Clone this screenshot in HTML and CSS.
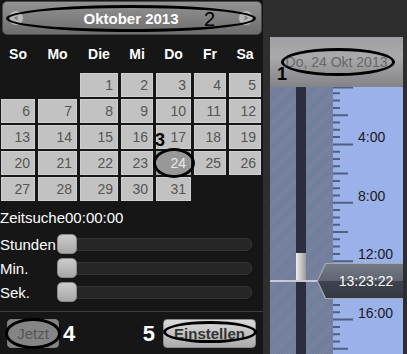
FILE: index.html
```html
<!DOCTYPE html>
<html lang="de">
<head>
    <meta charset="UTF-8">
    <meta name="viewport" content="width=device-width, initial-scale=1.0">
    <title>Kalender</title>
    <link rel="stylesheet" href="styles.css">
</head>
<body>
<div class="page">
    <!-- Datumsauswahl -->
    <div class="picker">
        <div class="month-bar">
            <span class="nav">
                <svg width="14" height="14" viewBox="0 0 14 14"><circle cx="7" cy="7" r="7" fill="#b9b9b9"/><path d="M4.5 7 L8.5 4.2 L8.5 9.8 Z" fill="#858585"/></svg>
            </span>
            <span class="month-title">Oktober 2013</span>
            <span class="nav">
                <svg width="14" height="14" viewBox="0 0 14 14"><circle cx="7" cy="7" r="7" fill="#b9b9b9"/><path d="M9.5 7 L5.5 4.2 L5.5 9.8 Z" fill="#858585"/></svg>
            </span>
            <span class="ring ring-month"></span>
            <span class="mark mark-2">2</span>
        </div>

        <div class="weekdays">
            <span>So</span><span>Mo</span><span>Die</span><span>Mi</span><span>Do</span><span>Fr</span><span>Sa</span>
        </div>

        <div class="days">
            <span class="day empty"></span><span class="day empty"></span>
            <span class="day">1</span><span class="day">2</span><span class="day">3</span><span class="day">4</span><span class="day">5</span>
            <span class="day">6</span><span class="day">7</span><span class="day">8</span><span class="day">9</span><span class="day">10</span><span class="day">11</span><span class="day">12</span>
            <span class="day">13</span><span class="day">14</span><span class="day">15</span><span class="day">16</span><span class="day">17</span><span class="day">18</span><span class="day">19</span>
            <span class="day">20</span><span class="day">21</span><span class="day">22</span><span class="day">23</span>
            <span class="day selected">24<span class="ring ring-day"></span><span class="mark mark-3">3</span></span>
            <span class="day">25</span><span class="day">26</span>
            <span class="day">27</span><span class="day">28</span><span class="day">29</span><span class="day">30</span><span class="day">31</span>
            <span class="day empty"></span><span class="day empty"></span>
        </div>

        <div class="time-search">Zeitsuche00:00:00</div>

        <div class="sliders">
            <div class="slider-row"><span class="slider-label">Stunden</span><div class="track"><span class="handle"></span></div></div>
            <div class="slider-row"><span class="slider-label">Min.</span><div class="track"><span class="handle"></span></div></div>
            <div class="slider-row"><span class="slider-label">Sek.</span><div class="track"><span class="handle"></span></div></div>
        </div>

        <div class="footer">
            <button class="btn btn-now">Jetzt<span class="ring ring-now"></span></button>
            <span class="mark-white mark-4">4</span>
            <span class="mark-white mark-5">5</span>
            <button class="btn btn-set">Einstellen<span class="ring ring-set"></span></button>
        </div>
    </div>

    <!-- Zeitleiste -->
    <div class="timeline">
        <div class="tl-head">
            Do, 24 Okt 2013
            <span class="ring ring-date"></span>
            <span class="mark mark-1">1</span>
        </div>
        <div class="tl-body">
            <div class="lane">
                <div class="strip"><span class="rec"></span></div>
            </div>
            <div class="ruler">
                <svg width="70" height="267" viewBox="0 0 70 267">
                    <path class="ticks" d="M0 0.5h20 M0 57.4h20 M0 115.8h20 M0 174.2h20 M0 232.6h20
                        M0 28.2h15 M0 86.6h15 M0 145h15 M0 203.4h15 M0 261.8h15
                        M0 6.3h7 M0 13.6h7 M0 20.9h7 M0 35.5h7 M0 42.8h7 M0 50.1h7
                        M0 64.7h7 M0 72h7 M0 79.3h7 M0 93.9h7 M0 101.2h7 M0 108.5h7
                        M0 123.1h7 M0 130.4h7 M0 137.7h7 M0 152.3h7 M0 159.6h7 M0 166.9h7
                        M0 181.5h7 M0 188.8h7 M0 196.1h7 M0 210.7h7 M0 218h7 M0 225.3h7
                        M0 239.9h7 M0 247.2h7 M0 254.5h7"/>
                    <text x="25" y="55.4">4:00</text>
                    <text x="25" y="113.8">8:00</text>
                    <text x="25" y="172.2">12:00</text>
                    <text x="25" y="230.6">16:00</text>
                </svg>
            </div>
            <span class="now-line"></span>
            <div class="now-tag"><span>13:23:22</span></div>
        </div>
    </div>
</div>
</body>
</html>
```

FILE: styles.css
```css
body {
    margin: 0;
    background: #2e2e2e;
    font-family: "Liberation Sans", Arial, sans-serif;
}
.page {
    display: flex;
    width: 407px;
    height: 354px;
    overflow: hidden;
}

/* Datumsauswahl */
.picker {
    flex: none;
    width: 263px;
    background: #161616;
}
.month-bar {
    position: relative;
    display: flex;
    align-items: center;
    justify-content: space-between;
    height: 34px;
    margin: 1px 1px 0 2px;
    padding: 0 8px 0 6px;
    box-sizing: border-box;
    border: 1px solid #4a4a4a;
    border-radius: 5px;
    background: linear-gradient(#939393, #6d6d6d);
}
.nav {
    display: flex;
}
.month-title {
    color: #fff;
    font-size: 15px;
    font-weight: bold;
}
.weekdays, .days {
    display: grid;
    grid-template-columns: 34px 39px 38px 32px 35px 32px 32px;
    column-gap: 3px;
    margin-left: 1px;
}
.weekdays {
    margin-top: 9px;
    line-height: 20px;
    color: #fff;
    font-size: 14px;
    font-weight: bold;
    text-align: center;
}
.days {
    margin-top: 9px;
    grid-auto-rows: 24px;
    row-gap: 2px;
}
.day {
    box-sizing: border-box;
    padding-right: 4px;
    border: 1px solid #d0d0d0;
    background: #c2c2c2;
    color: #555;
    font-size: 14px;
    line-height: 22px;
    text-align: right;
}
.day.empty {
    border: none;
    background: none;
}
.day.selected {
    position: relative;
    border-color: #a4a4a4;
    background: #989898;
    color: #e8e8e8;
}
.time-search {
    margin-top: 8px;
    color: #fff;
    font-size: 15px;
    line-height: 18px;
}
.sliders {
    margin-top: 5px;
}
.slider-row {
    display: flex;
    align-items: center;
    height: 24px;
    color: #fff;
    font-size: 15px;
}
.slider-label {
    width: 57px;
}
.track {
    position: relative;
    width: 195px;
    height: 13px;
    box-sizing: border-box;
    border: 1px solid #353535;
    border-radius: 6px;
    background: #262626;
}
.handle {
    position: absolute;
    left: -1px;
    top: -4.5px;
    width: 20px;
    height: 20px;
    box-sizing: border-box;
    border: 1px solid #8a8a8a;
    border-radius: 5px;
    background: linear-gradient(#cbcbcb, #a8a8a8);
}
.footer {
    display: flex;
    align-items: center;
    margin-top: 7px;
    padding: 7px 7px 0 7px;
    border-top: 1px solid #3c3c3c;
}
.btn {
    position: relative;
    height: 29px;
    padding: 0;
    box-sizing: border-box;
    border-radius: 4px;
    font-family: inherit;
    font-size: 15px;
}
.btn-now {
    width: 52px;
    border: 1px solid #7a7a7a;
    background: #858585;
    color: #555;
}
.btn-set {
    width: 93px;
    border: 1px solid #8a8a8a;
    background: linear-gradient(#dadada, #ababab);
    color: #333;
    font-weight: bold;
}
.mark-white {
    color: #fff;
    font-size: 22px;
    font-weight: bold;
    line-height: 22px;
}
.mark-4 {
    margin-left: 4px;
}
.mark-5 {
    margin-left: auto;
    margin-right: 8px;
}

/* Markierungen */
.ring {
    position: absolute;
    box-sizing: border-box;
    border: 3px solid #000;
    border-radius: 50%;
}
.ring-month { left: 3px; top: 3px; width: 250px; height: 27px; }
.ring-day { left: -4px; top: -4px; width: 42px; height: 30px; }
.ring-now { left: -3px; top: -2px; width: 56px; height: 31px; }
.ring-set { left: -1px; top: 1px; width: 94px; height: 22px; }
.ring-date { left: 11px; top: 11px; width: 114px; height: 28px; }
.mark {
    position: absolute;
    color: #000;
}
.mark-2 { left: 201px; top: 7px; font-size: 20px; line-height: 20px; }
.mark-3 { left: -2px; top: -21px; font-size: 18px; font-weight: bold; line-height: 18px; }
.mark-1 { left: 7px; top: 28px; font-size: 18px; font-weight: bold; line-height: 18px; }

/* Zeitleiste */
.timeline {
    flex: none;
    display: flex;
    flex-direction: column;
    width: 133px;
    margin: 37px 0 0 7px;
}
.tl-head {
    position: relative;
    height: 50px;
    background: linear-gradient(#a0a0a4, #aaaaad 40%, #838388);
    color: #666;
    font-size: 14px;
    line-height: 50px;
    text-align: center;
}
.tl-body {
    position: relative;
    display: flex;
    flex: 1;
}
.lane {
    display: flex;
    width: 63px;
    padding-left: 26px;
    box-sizing: border-box;
    background: repeating-linear-gradient(-45deg, #6f7c9a 0 1px, #7884a1 1px 2px);
}
.strip {
    position: relative;
    width: 10px;
    background: #2b2f3b;
}
.rec {
    position: absolute;
    left: 0;
    top: 166px;
    width: 10px;
    height: 28px;
    background: linear-gradient(to right, #f0f0f0, #9a9a9a);
}
.ruler {
    width: 70px;
    background: #9ab1ea;
}
.ruler svg {
    display: block;
}
.ticks {
    fill: none;
    stroke: #4f5f80;
    stroke-width: 2;
}
.ruler text {
    fill: #1a1a1a;
    font-family: "Liberation Sans", Arial, sans-serif;
    font-size: 14px;
}
.now-line {
    position: absolute;
    left: 0;
    top: 193px;
    width: 48px;
    height: 2px;
    background: #c8cbd0;
}
.now-tag {
    position: absolute;
    left: 47px;
    top: 176px;
    width: 86px;
    height: 36px;
    box-sizing: border-box;
    padding-left: 12px;
    background: #a6aab2;
    clip-path: polygon(0 50%, 8px 0, 100% 0, 100% 100%, 8px 100%);
    color: #fff;
    font-size: 14px;
    line-height: 36px;
    text-align: center;
}
.now-tag::before {
    content: "";
    position: absolute;
    left: 1px;
    top: 1px;
    right: 0;
    bottom: 1px;
    background: linear-gradient(#747a86, #5e6471 50%, #3e434e 50%, #353944);
    clip-path: polygon(0 50%, 8px 0, 100% 0, 100% 100%, 8px 100%);
}
.now-tag span {
    position: relative;
}
```
